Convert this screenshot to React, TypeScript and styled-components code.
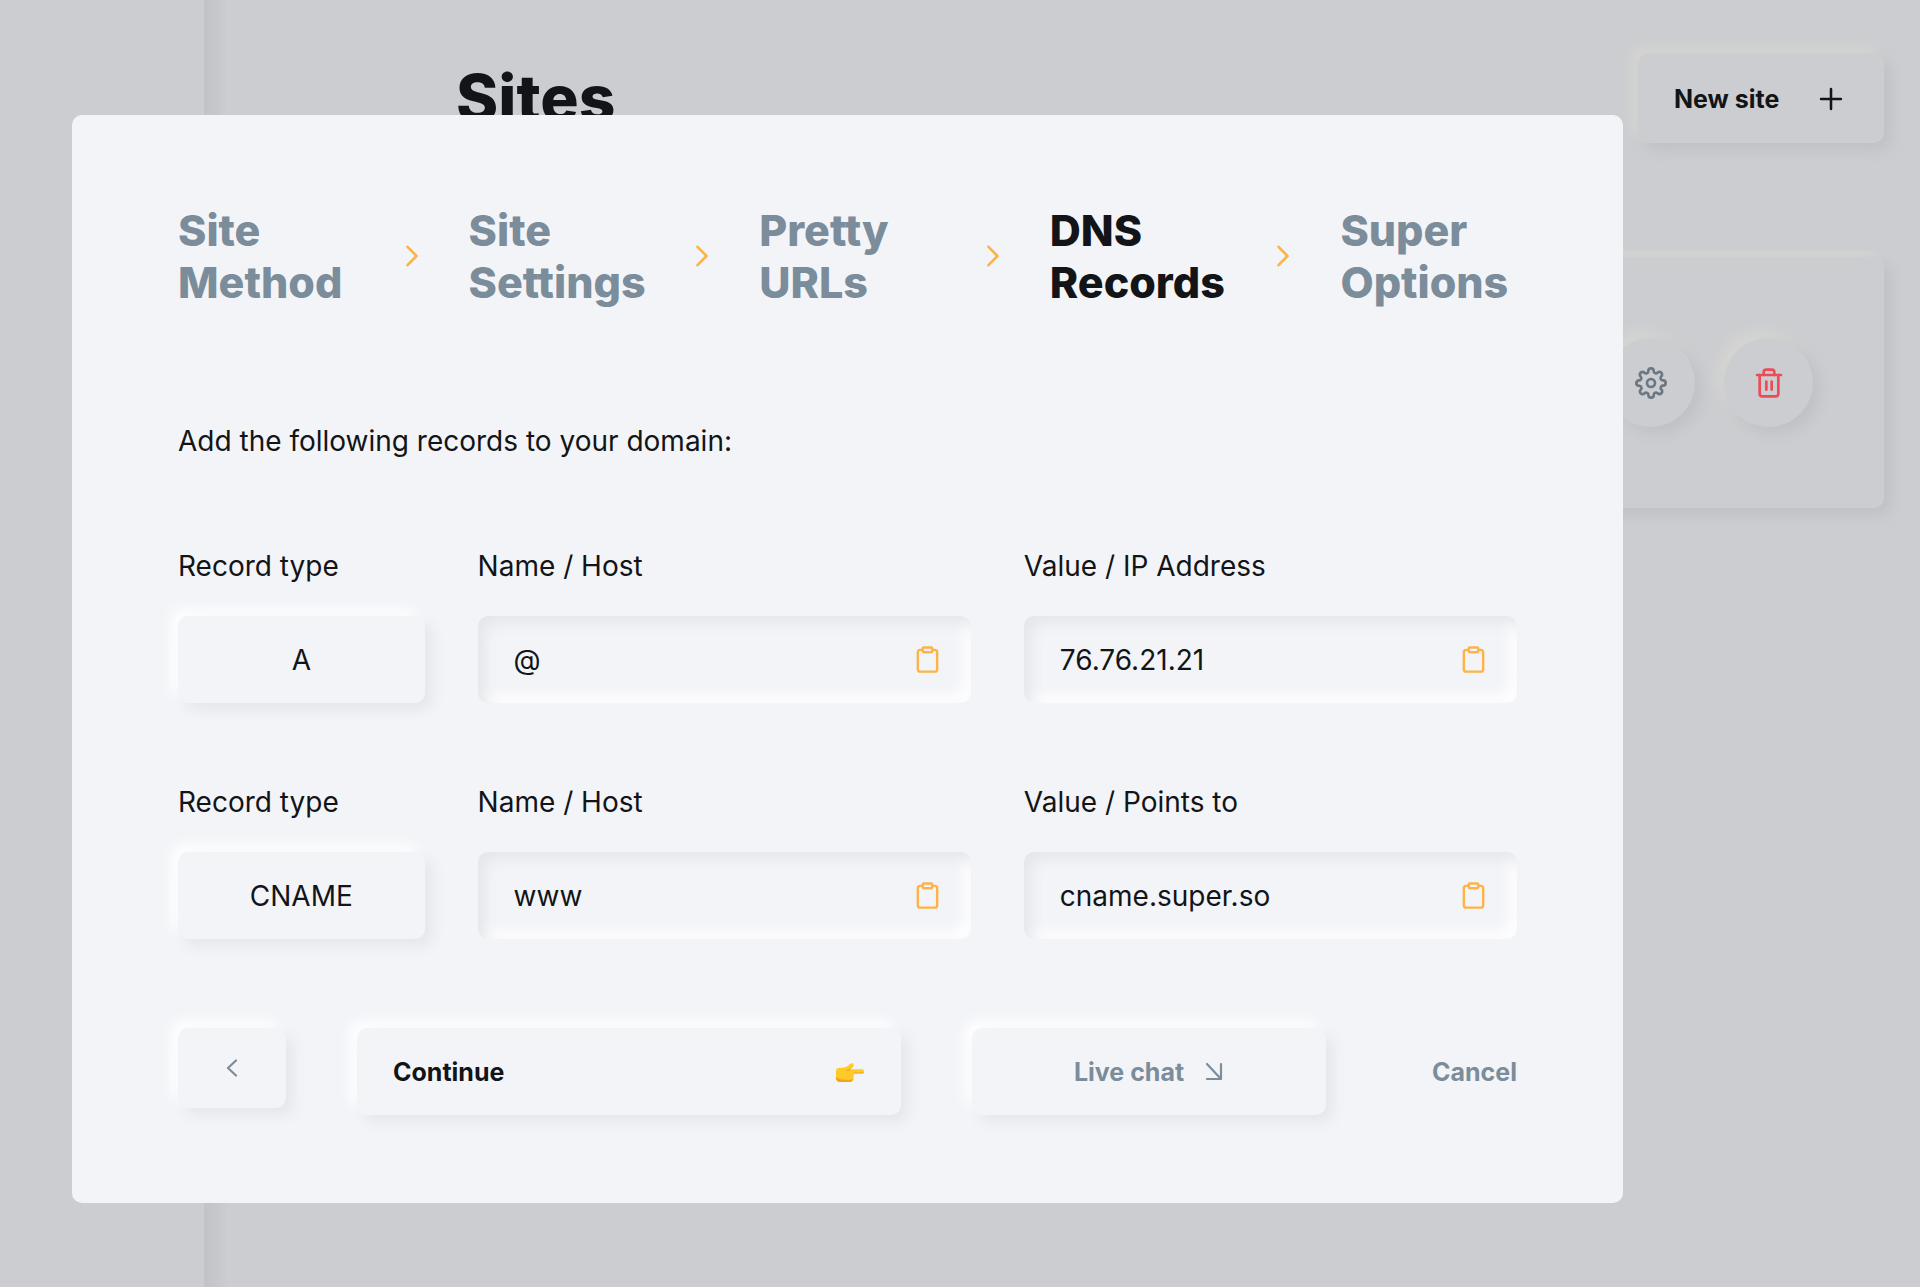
import React from 'react';
import styled, { createGlobalStyle, css } from 'styled-components';

const ink = '#121417';
const slate = '#7b8c9b';
const amber = '#fdb347';
const surface = '#f3f4f8';
const dimmed = '#cccdd0';

const GlobalStyle = createGlobalStyle`
  *, *::before, *::after { box-sizing: border-box; }
  body {
    margin: 0;
    background: ${dimmed};
    color: ${ink};
    font-family: Inter, "Liberation Sans", sans-serif;
  }
  button, input {
    font: inherit;
    color: inherit;
    border: 0;
    margin: 0;
  }
  button { cursor: pointer; }
`;

const raised = css`
  background: ${surface};
  border-radius: 10px;
  box-shadow: 7px 7px 14px #e5e6ea, -7px -7px 14px #ffffff;
`;

const raisedDimmed = css`
  background: ${dimmed};
  box-shadow: 7px 7px 14px #c0c1c5, -7px -7px 14px #d5d5d3;
`;

const Page = styled.div`
  display: flex;
  min-height: 100vh;
`;

const Sidebar = styled.aside`
  flex: 0 0 204px;
`;

const Main = styled.main`
  flex: 1;
  min-width: 0;
  padding: 54px 36px 54px 252px;
  background: linear-gradient(to right, #c3c3c7 0, #c6c7ca 12px, ${dimmed} 24px);
`;

const PageHeader = styled.header`
  display: flex;
  justify-content: space-between;
  align-items: flex-start;
`;

const PageTitle = styled.h1`
  margin: 0;
  font-size: 64px;
  line-height: 87px;
  font-weight: 800;
`;

const NewSite = styled.button`
  ${raisedDimmed}
  display: flex;
  align-items: center;
  justify-content: space-between;
  width: 246px;
  height: 89px;
  padding: 0 36px;
  border-radius: 10px;
  font-size: 25px;
  font-weight: 700;
`;

const SiteList = styled.section`
  margin-top: 107px;
  margin-right: -36px;
  padding: 7px 36px 36px 0;
  overflow: hidden;
`;

const SiteCard = styled.article`
  ${raisedDimmed}
  display: flex;
  align-items: center;
  justify-content: flex-end;
  gap: 29px;
  height: 251px;
  padding: 0 71px;
  border-radius: 10px;
`;

const RoundButton = styled.button<{ $tone: string }>`
  ${raisedDimmed}
  display: grid;
  place-items: center;
  width: 89px;
  height: 89px;
  padding: 0;
  border-radius: 50%;
  color: ${({ $tone }) => $tone};
`;

const Overlay = styled.div`
  position: fixed;
  inset: 0;
  padding: 115px 297px 84px 72px;
  overflow: auto;
`;

const Dialog = styled.section`
  padding: 89px 106px 88px;
  border-radius: 10px;
  background: ${surface};
`;

const Steps = styled.ol`
  display: grid;
  grid-template-columns: repeat(4, 1fr 114px) 1fr;
  align-items: center;
  margin: 0;
  padding: 0;
  list-style: none;
`;

const Step = styled.li<{ $current?: boolean }>`
  min-width: 0;
  font-size: 43px;
  line-height: 52px;
  font-weight: 800;
  color: ${({ $current }) => ($current ? ink : slate)};
`;

const StepArrow = styled.li`
  display: grid;
  place-items: center;
  color: ${amber};
`;

const Intro = styled.p`
  margin: 107px 0 0;
  font-size: 28px;
  line-height: 52px;
`;

const RecordRow = styled.div`
  display: grid;
  grid-template-columns: 1fr 2fr 2fr;
  column-gap: 53px;
  margin-top: 73px;
`;

const Field = styled.div`
  display: flex;
  flex-direction: column;
  gap: 24px;
  min-width: 0;
`;

const Label = styled.label`
  font-size: 28px;
  line-height: 52px;
`;

const TypeBox = styled.output`
  ${raised}
  display: grid;
  place-items: center;
  height: 87px;
  font-size: 28px;
`;

const ValueBox = styled.div`
  display: flex;
  align-items: center;
  height: 87px;
  padding: 0 29px 0 36px;
  border-radius: 10px;
  box-shadow: inset 7px 7px 14px #e5e6ea, inset -7px -7px 14px #ffffff;
`;

const ValueInput = styled.input`
  flex: 1;
  min-width: 0;
  padding: 0;
  background: transparent;
  font-size: 28px;
  outline: none;
`;

const CopyButton = styled.button`
  display: grid;
  padding: 0;
  background: transparent;
  color: ${amber};
`;

const Actions = styled.footer`
  display: grid;
  grid-template-columns: 108px 544fr 354fr 120px;
  align-items: start;
  gap: 71px;
  margin-top: 89px;
`;

const ActionButton = styled.button<{ $muted?: boolean; $spread?: boolean }>`
  ${raised}
  display: flex;
  align-items: center;
  justify-content: ${({ $spread }) => ($spread ? 'space-between' : 'center')};
  gap: 20px;
  height: 87px;
  padding: 0 36px;
  font-size: 25px;
  font-weight: 700;
  color: ${({ $muted }) => ($muted ? slate : ink)};
`;

const BackButton = styled.button`
  ${raised}
  display: grid;
  place-items: center;
  height: 80px;
  padding: 0;
  color: ${slate};
`;

const CancelButton = styled.button`
  height: 87px;
  padding: 0;
  background: transparent;
  color: ${slate};
  font-size: 25px;
  font-weight: 700;
  text-align: right;
`;

type IconProps = { size: number; stroke?: number; children: React.ReactNode };

const Icon = ({ size, stroke = 2, children }: IconProps) => (
  <svg width={size} height={size} viewBox="0 0 24 24" fill="none" stroke="currentColor"
    strokeWidth={stroke} strokeLinecap="round" strokeLinejoin="round" aria-hidden="true">
    {children}
  </svg>
);

const ClipboardIcon = () => (
  <Icon size={29}>
    <path d="M16 4h2a2 2 0 0 1 2 2v14a2 2 0 0 1-2 2H6a2 2 0 0 1-2-2V6a2 2 0 0 1 2-2h2" />
    <rect x="8" y="2" width="8" height="4" rx="1" />
  </Icon>
);

const SettingsIcon = () => (
  <Icon size={32}>
    <circle cx="12" cy="12" r="3" />
    <path d="M19.4 15a1.65 1.65 0 0 0 .33 1.82l.06.06a2 2 0 0 1 0 2.83 2 2 0 0 1-2.83 0l-.06-.06a1.65 1.65 0 0 0-1.82-.33 1.65 1.65 0 0 0-1 1.51V21a2 2 0 0 1-2 2 2 2 0 0 1-2-2v-.09A1.65 1.65 0 0 0 9 19.4a1.65 1.65 0 0 0-1.82.33l-.06.06a2 2 0 0 1-2.83 0 2 2 0 0 1 0-2.83l.06-.06a1.65 1.65 0 0 0 .33-1.82 1.65 1.65 0 0 0-1.51-1H3a2 2 0 0 1-2-2 2 2 0 0 1 2-2h.09A1.65 1.65 0 0 0 4.6 9a1.65 1.65 0 0 0-.33-1.82l-.06-.06a2 2 0 0 1 0-2.83 2 2 0 0 1 2.83 0l.06.06a1.65 1.65 0 0 0 1.82.33H9a1.65 1.65 0 0 0 1-1.51V3a2 2 0 0 1 2-2 2 2 0 0 1 2 2v.09a1.65 1.65 0 0 0 1 1.51 1.65 1.65 0 0 0 1.82-.33l.06-.06a2 2 0 0 1 2.83 0 2 2 0 0 1 0 2.83l-.06.06a1.65 1.65 0 0 0-.33 1.82V9a1.65 1.65 0 0 0 1.51 1H21a2 2 0 0 1 2 2 2 2 0 0 1-2 2h-.09a1.65 1.65 0 0 0-1.51 1z" />
  </Icon>
);

const TrashIcon = () => (
  <Icon size={32}>
    <path d="M3 6h18" />
    <path d="M19 6v14a2 2 0 0 1-2 2H7a2 2 0 0 1-2-2V6m3 0V4a2 2 0 0 1 2-2h4a2 2 0 0 1 2 2v2" />
    <path d="M10 11v6M14 11v6" />
  </Icon>
);

const PointingHand = () => (
  <svg width="30" height="30" viewBox="0 0 30 30" aria-hidden="true">
    <path d="M1 13.500c0-2 1.500-2.800 3.800-2.800h3.200c3 0 5-1.600 7-3.600 1.300-1.300 3.600-.9 3.600.8 0 1.600-1.700 3.300-3 4.400h11.600c2.400 0 2.400 4.200 0 4.200h-8.700c.9 3.400-.6 7.800-3.200 7.800H4.500C2 24.300 1 22.800 1 20.500z" fill="#ffca28" />
    <path d="M1 19.500v1.500c0 2.400 1.300 3.900 3.500 3.900h11c1.800 0 2.700-1.600 3.200-3.600-1.500 1.500-4.200 1.900-7.200 1.500-4-.4-8.500-.2-10.500-3.300z" fill="#f5a21b" />
    <path d="M18.500 16.500h8.700c1.100 0 1.700-.6 1.800-1.600-1 .6-2 .7-3.500.7h-7z" fill="#f3a51b" />
    <path d="M11.500 13.800c1.500-.3 2.500-1 3.500-1.800" stroke="#e79a1a" strokeWidth="1" fill="none" />
  </svg>
);

const steps = ['Site Method', 'Site Settings', 'Pretty URLs', 'DNS Records', 'Super Options'];
const currentStep = 3;

const records = [
  { id: 'a', type: 'A', host: '@', valueLabel: 'Value / IP Address', value: '76.76.21.21' },
  { id: 'cname', type: 'CNAME', host: 'www', valueLabel: 'Value / Points to', value: 'cname.super.so' },
];

type CopyFieldProps = { id: string; label: string; value: string };

const CopyField = ({ id, label, value }: CopyFieldProps) => (
  <Field>
    <Label htmlFor={id}>{label}</Label>
    <ValueBox>
      <ValueInput id={id} type="text" readOnly value={value} />
      <CopyButton type="button" aria-label={`Copy ${label}`} onClick={() => navigator.clipboard?.writeText(value)}>
        <ClipboardIcon />
      </CopyButton>
    </ValueBox>
  </Field>
);

export default function App() {
  return (
    <>
      <GlobalStyle />
      <Page>
        <Sidebar />
        <Main>
          <PageHeader>
            <PageTitle>Sites</PageTitle>
            <NewSite type="button">
              New site
              <Icon size={34} stroke={1.8}><path d="M12 5v14M5 12h14" /></Icon>
            </NewSite>
          </PageHeader>
          <SiteList>
            <SiteCard>
              <RoundButton type="button" $tone="#6b7782" aria-label="Site settings">
                <SettingsIcon />
              </RoundButton>
              <RoundButton type="button" $tone="#ee4b58" aria-label="Delete site">
                <TrashIcon />
              </RoundButton>
            </SiteCard>
          </SiteList>
        </Main>
      </Page>
      <Overlay>
        <Dialog role="dialog" aria-modal="true" aria-label="DNS Records">
          <Steps>
            {steps.map((step, index) => (
              <React.Fragment key={step}>
                {index > 0 && (
                  <StepArrow aria-hidden="true">
                    <svg width="12" height="22" viewBox="0 0 12 22" fill="none" stroke="currentColor"
                      strokeWidth="2.600" strokeLinecap="round" strokeLinejoin="round">
                      <path d="M1.500 1.800 10.500 11l-9 9.200" />
                    </svg>
                  </StepArrow>
                )}
                <Step $current={index === currentStep} aria-current={index === currentStep ? 'step' : undefined}>
                  {step}
                </Step>
              </React.Fragment>
            ))}
          </Steps>
          <Intro>Add the following records to your domain:</Intro>
          {records.map((record) => (
            <RecordRow key={record.id}>
              <Field>
                <Label htmlFor={`${record.id}-type`}>Record type</Label>
                <TypeBox id={`${record.id}-type`}>{record.type}</TypeBox>
              </Field>
              <CopyField id={`${record.id}-host`} label="Name / Host" value={record.host} />
              <CopyField id={`${record.id}-value`} label={record.valueLabel} value={record.value} />
            </RecordRow>
          ))}
          <Actions>
            <BackButton type="button" aria-label="Back">
              <svg width="12" height="18" viewBox="0 0 12 18" fill="none" stroke="currentColor"
                strokeWidth="2.200" strokeLinecap="round" strokeLinejoin="round" aria-hidden="true">
                <path d="M10 1.500 2 9l8 7.500" />
              </svg>
            </BackButton>
            <ActionButton type="button" $spread>
              Continue
              <PointingHand />
            </ActionButton>
            <ActionButton type="button" $muted>
              Live chat
              <svg width="20" height="20" viewBox="0 0 20 20" fill="none" stroke="currentColor"
                strokeWidth="2.200" strokeLinecap="round" strokeLinejoin="round" aria-hidden="true">
                <path d="M3 2l14 15M17 2v15H3" />
              </svg>
            </ActionButton>
            <CancelButton type="button">Cancel</CancelButton>
          </Actions>
        </Dialog>
      </Overlay>
    </>
  );
}
